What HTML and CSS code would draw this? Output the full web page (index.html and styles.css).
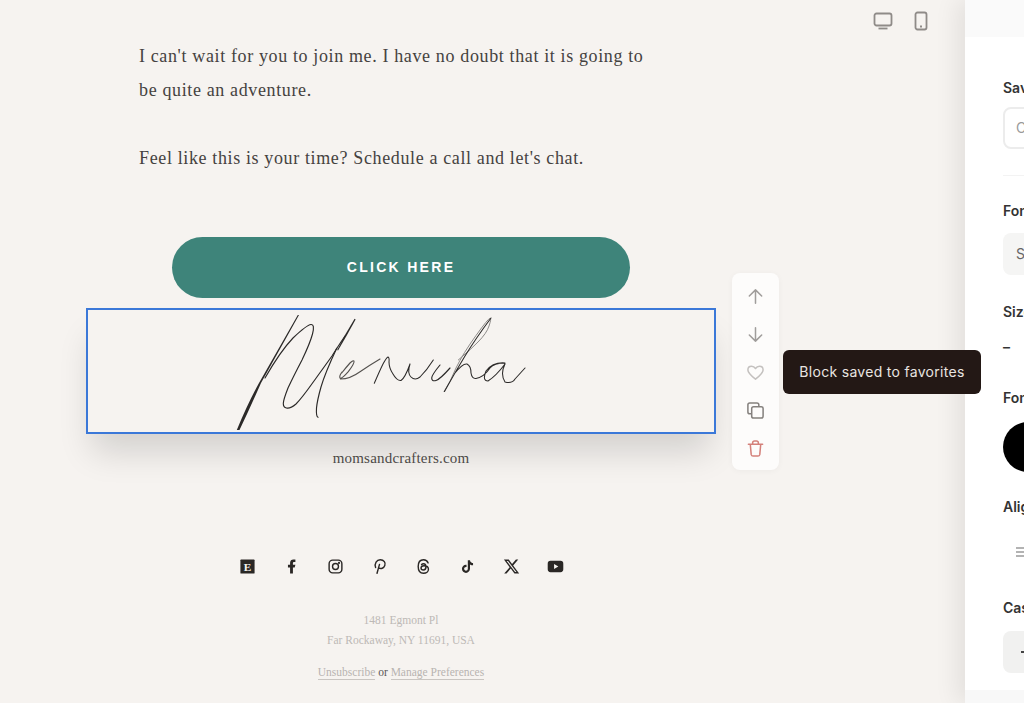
FILE: index.html
```html
<!DOCTYPE html>
<html lang="en">
<head>
<meta charset="utf-8">
<title>Email editor</title>
<link rel="stylesheet" href="styles.css">
</head>
<body>
<div class="app">
  <main class="canvas">
    <div class="device-switch">
      <svg class="device-icon" width="20" height="20" viewBox="0 0 20 20"><rect x="1.500" y="2.500" width="17" height="12" rx="2"/><path d="M5.500 17.500h9"/></svg>
      <svg class="device-icon" width="20" height="20" viewBox="0 0 20 20"><rect x="4.500" y="1.500" width="11" height="17" rx="2"/><path d="M9 15.500h2"/></svg>
    </div>

    <div class="email">
      <div class="copy">
        <p>I can't wait for you to join me. I have no doubt that it is going to be quite an adventure.</p>
        <p>Feel like this is your time? Schedule a call and let's chat.</p>
      </div>
      <a class="cta">CLICK HERE</a>

      <div class="selected-block">
        <svg class="signature" width="300" height="120" viewBox="230 312 300 120" role="img" aria-label="Menucha">
          <path class="sig-fill" d="M236.800 432L239.500 432Q250 410 261 385L299 317L297.800 317L259 385Q248 405 236.800 432Z"/>
          <path class="sig-fill" d="M345 337L354.600 320.800L355.600 321.400L347 337L338 352.500L337.200 352Z"/>
          <path class="sig" d="M265 380Q280 353.700 293 340Q306.700 327 311 326.500Q315 326 312.500 336Q310 345.300 302 362Q293.300 378.700 288 390Q283.300 402 283.300 405.500Q283.300 409.300 286.500 410Q290 411 296 406Q301.700 400.300 314 383Q326.700 365.300 332 358Q336.700 350.300 345 338"/>
          <path class="sig" d="M336.700 350.300Q325 375.300 321 389Q317.300 402 316.500 410Q316 418.700 318 419.300"/>
          <path class="sig sig-mid" d="M341.700 375Q346.700 368.700 350 365Q353.300 362 354 363Q354.800 365 348.300 373.700Q341.700 381.300 340 380Q339 378 342 374M340.500 381Q350 381 360 373.700Q370 367 380 361"/>
          <path class="sig sig-dark" d="M374.300 385.300Q380 372 383 366Q386.700 359.300 388 359Q389.500 359.500 389 364Q389 370 393 376Q397 383 401 382.500Q405 380 410 366Q407 375 411 379Q415 383 420 379Q427 372 433.300 362"/>
          <path class="sig" d="M440 367Q431.700 377 431.700 380Q431.700 383.700 436 382.500Q440 381.300 450 370"/>
          <path class="sig sig-light" d="M444 393.700Q450 385 456 370Q463.300 355 476 337.500Q488.300 320.300 490 320.300Q491.700 320.300 489 328Q486.700 335.300 478 344Q470 352 464 357L458.300 362"/>
          <path class="sig sig-dark" d="M491 320Q476 340 465 358Q453 378 444.500 393.500M455 375Q463 365 467 366Q471 368 471 375Q472 381 476 380.500Q484 379 490 370Q494 365 505 365Q493 364 486 373Q482 383 488 383Q496 378 505 366Q500 376 505 384Q512 386 515 381L525 370"/>
        </svg>
      </div>

      <p class="domain">momsandcrafters.com</p>

      <div class="social">
        <svg class="social-icon" viewBox="0 0 24 24"><rect x="2" y="2" width="20" height="20" rx="1"/><text class="etsy" x="12" y="18" text-anchor="middle">E</text></svg>
        <svg class="social-icon" viewBox="0 0 24 24"><path d="M14 13.500h2.500l1-4H14v-2c0-1.030 0-2 2-2h1.500V2.140c-.326-.043-1.557-.14-2.857-.14C11.928 2 10 3.657 10 6.700v2.800H7v4h3V22h4v-8.500z"/></svg>
        <svg class="social-icon line" viewBox="0 0 24 24"><rect x="3" y="3" width="18" height="18" rx="5"/><circle cx="12" cy="12" r="4.200"/><circle class="dot" cx="17" cy="7" r=".6"/></svg>
        <svg class="social-icon line" viewBox="0 0 24 24"><path d="M8.500 21.500L12 9M6.500 13.500C4.500 8 8 2.500 13 2.500C18.500 2.500 21 7 19.500 10.500C18 14.500 14 16 11 14"/></svg>
        <svg class="social-icon line" viewBox="0 0 24 24"><path d="M18.500 7C17.400 4 15 2.500 12 2.500C7 2.500 4.500 6 4.500 12C4.500 18 7 21.500 12 21.500C16 21.500 19 19 19 16C19 12.500 15.500 11 12.500 11C10 11 8.500 12.500 8.500 14.200C8.500 16 10 17 11.800 17C14 17 15.500 15.500 15.500 12.500C15.500 9.500 14 8 12 8C10.800 8 10 8.500 9.300 9.300"/></svg>
        <svg class="social-icon" viewBox="0 0 24 24"><path d="M16.600 5.820A4.278 4.278 0 0 1 15.540 3h-3.090v12.400a2.592 2.592 0 0 1-2.590 2.500c-1.420 0-2.600-1.160-2.600-2.600 0-1.720 1.660-3.010 3.370-2.480V9.660c-3.450-.46-6.470 2.220-6.470 5.640 0 3.330 2.760 5.700 5.690 5.700 3.140 0 5.690-2.550 5.690-5.700V9.010a7.350 7.350 0 0 0 4.300 1.380V7.300s-1.880.09-3.240-1.480z"/></svg>
        <svg class="social-icon" viewBox="0 0 24 24"><path d="M18.244 2.250h3.308l-7.227 8.260 8.502 11.240H16.170l-5.214-6.817L4.990 21.750H1.680l7.730-8.835L1.254 2.250H8.080l4.713 6.231zm-1.161 17.520h1.833L7.084 4.126H5.117z"/></svg>
        <svg class="social-icon" viewBox="0 0 24 24"><path fill-rule="evenodd" d="M5 4h14a4 4 0 0 1 4 4v8a4 4 0 0 1-4 4H5a4 4 0 0 1-4-4V8a4 4 0 0 1 4-4zm5 4.500v7l6-3.500z"/></svg>
      </div>

      <div class="footer">
        <p>1481 Egmont Pl</p>
        <p>Far Rockaway, NY 11691, USA</p>
        <p class="links"><a>Unsubscribe</a> <span class="or">or</span> <a>Manage Preferences</a></p>
      </div>
    </div>

    <div class="block-tools">
      <svg class="tool" viewBox="0 0 20 20"><path d="M10 17V3M3.500 9.500L10 3l6.500 6.500"/></svg>
      <svg class="tool" viewBox="0 0 20 20"><path d="M10 3v14M3.500 10.500L10 17l6.500-6.500"/></svg>
      <svg class="tool tool-fav" viewBox="0 0 20 20"><path d="M10 17C5 13 2 10.500 2 7.300C2 5 3.800 3.500 5.800 3.500C7.500 3.500 9 4.300 10 5.800C11 4.300 12.500 3.500 14.200 3.500C16.200 3.500 18 5 18 7.300C18 10.500 15 13 10 17Z"/></svg>
      <svg class="tool tool-copy" viewBox="0 0 20 20"><path d="M5 13.500H4A2 2 0 0 1 2 11.500V4A2 2 0 0 1 4 2H11.500A2 2 0 0 1 13.500 4V5"/><rect x="6" y="6" width="12" height="12" rx="2"/></svg>
      <svg class="tool tool-del" viewBox="0 0 20 20"><path d="M2.500 5.500h15M7 5.500V4A2 2 0 0 1 9 2h2a2 2 0 0 1 2 2v1.500M4.500 5.500l1 11a2 2 0 0 0 2 1.500h5a2 2 0 0 0 2-1.500l1-11"/></svg>
    </div>
    <div class="tooltip">Block saved to favorites</div>
  </main>

  <aside class="panel">
    <div class="panel-top"></div>
    <div class="panel-body">
      <div class="label label-first">Saved styles</div>
      <div class="field field-outline">Choose a style</div>
      <div class="rule"></div>
      <div class="label label-font">Font</div>
      <div class="field field-fill">Serif</div>
      <div class="label label-size">Size</div>
      <div class="stepper">–</div>
      <div class="label label-color">Font color</div>
      <div class="swatch"></div>
      <div class="label label-align">Align</div>
      <svg class="align-icon" width="14" height="14" viewBox="0 0 14 14"><path d="M2 3h12M2 7h12M2 11h12"/></svg>
      <div class="label label-case">Case</div>
      <div class="field field-case"><span class="case-mark"></span></div>
    </div>
  </aside>
</div>
</body>
</html>
```
FILE: styles.css
```css
* { box-sizing: border-box; }
html, body { margin: 0; height: 703px; overflow: hidden; }
p { margin: 0; }

.app { display: flex; width: 1024px; height: 703px; background: #f6f3f0; }

.canvas { flex: 0 0 965px; position: relative; }
.device-switch { position: absolute; top: 11px; left: 873px; display: flex; gap: 18px; }
.device-icon { fill: none; stroke: #8f8b88; stroke-width: 1.8; }

.email { width: 630px; margin-left: 86px; padding-top: 39px; font-family: "Liberation Serif", serif; }
.copy { padding: 0 60px 0 53px; font-size: 18px; line-height: 34px; letter-spacing: .63px; color: #454240; }
.copy p + p { margin-top: 34px; }

.cta {
  display: block; width: 458px; height: 61px; margin: 62px 0 10px 86px;
  border-radius: 31px; background: #3e847a; color: #fff;
  font: bold 14px/61px "Liberation Sans", sans-serif; letter-spacing: 2.3px; text-align: center;
}

.selected-block {
  height: 126px; padding: 0 0 0 142px; border: 2px solid #3b78d8; background: #f6f3f0;
  box-shadow: 0 24px 32px -6px rgba(0,0,0,.14);
}
.signature { display: block; }
.sig { fill: none; stroke: #2b2928; stroke-width: 1.15; stroke-linecap: round; stroke-linejoin: round; }
.sig-mid { stroke: #55524f; }
.sig-dark { stroke: #2b2928; stroke-width: 1.05; }
.sig-light { stroke: #8d8a88; stroke-width: 1; }
.sig-fill { fill: #2b2928; }

.domain { margin-top: 12px; text-align: center; font-size: 15px; line-height: 24px; letter-spacing: .2px; color: #4c4947; }

.social { display: flex; justify-content: center; gap: 27px; margin-top: 88px; }
.social-icon { display: block; width: 17px; height: 17px; fill: #2a2725; }
.social-icon.line { fill: none; stroke: #2a2725; stroke-width: 2; stroke-linecap: round; }
.social-icon .dot { fill: #2a2725; }
.etsy { fill: #f6f3f0; font: bold 16px "Liberation Serif", serif; }

.footer { margin-top: 35px; text-align: center; font-size: 11.5px; line-height: 20px; color: #bdb9b6; }
.links { margin-top: 12px; color: #b8b4b0; }
.links a { border-bottom: 1px solid #c9c5c1; padding-bottom: 1px; }
.or { color: #5a5755; }

.block-tools {
  position: absolute; top: 273px; left: 732px; width: 47px; height: 197px;
  display: flex; flex-direction: column; align-items: center; gap: 19px; padding-top: 14px;
  background: #fdfcfb; border-radius: 8px; box-shadow: 0 1px 6px rgba(0,0,0,.04);
}
.tool { display: block; width: 19px; height: 19px; fill: none; stroke: #a09d9b; stroke-width: 1.6; stroke-linecap: round; stroke-linejoin: round; }
.tool-fav { stroke: #c4c1bf; }
.tool-copy { stroke: #85817e; }
.tool-del { stroke: #d4807a; }

.tooltip {
  position: absolute; z-index: 2; top: 350px; left: 783px; width: 198px; height: 44px;
  border-radius: 6px; background: #231815; color: #e9e5e1;
  font: 14px/43px Inter, sans-serif; letter-spacing: .3px; text-align: center;
}

.panel {
  flex: 0 0 59px; position: relative; z-index: 1; background: #f8f8f8;
  box-shadow: -8px 0 22px rgba(0,0,0,.08);
  font-family: Inter, sans-serif; clip-path: inset(0 0 0 -40px);
}
.panel-top { height: 37px; background: #fafafa; }
.panel-body { height: 653px; padding-left: 38px; background: #fff; overflow: hidden; white-space: nowrap; }
.label { font-size: 14px; line-height: 18px; font-weight: 600; color: #333; }
.label-first { margin-top: 42px; }
.field { width: 200px; height: 42px; margin-top: 10px; border-radius: 8px; font-size: 14px; line-height: 42px; padding-left: 13px; color: #9a9a9a; }
.field-outline { border: 2px solid #ececec; line-height: 38px; padding-left: 11px; }
.rule { width: 200px; height: 1px; margin-top: 26px; background: #f3f3f3; }
.label-font { margin-top: 26px; }
.field-fill { margin-top: 13px; background: #f5f5f4; color: #666; }
.label-size { margin-top: 28px; }
.stepper { margin-top: 16px; font-size: 14px; line-height: 20px; font-weight: 600; color: #333; }
.label-color { margin-top: 32px; }
.swatch { width: 50px; height: 50px; margin-top: 15px; border-radius: 50%; background: #000; }
.label-align { margin-top: 26px; }
.align-icon { display: block; margin: 29px 0 0 11px; fill: none; stroke: #9a9a9a; stroke-width: 1.4; }
.label-case { margin-top: 40px; }
.field-case { display: flex; align-items: center; margin-top: 14px; padding-left: 18px; background: #f1f1f0; }
.case-mark { display: block; width: 6px; height: 2px; background: #444; }
```
